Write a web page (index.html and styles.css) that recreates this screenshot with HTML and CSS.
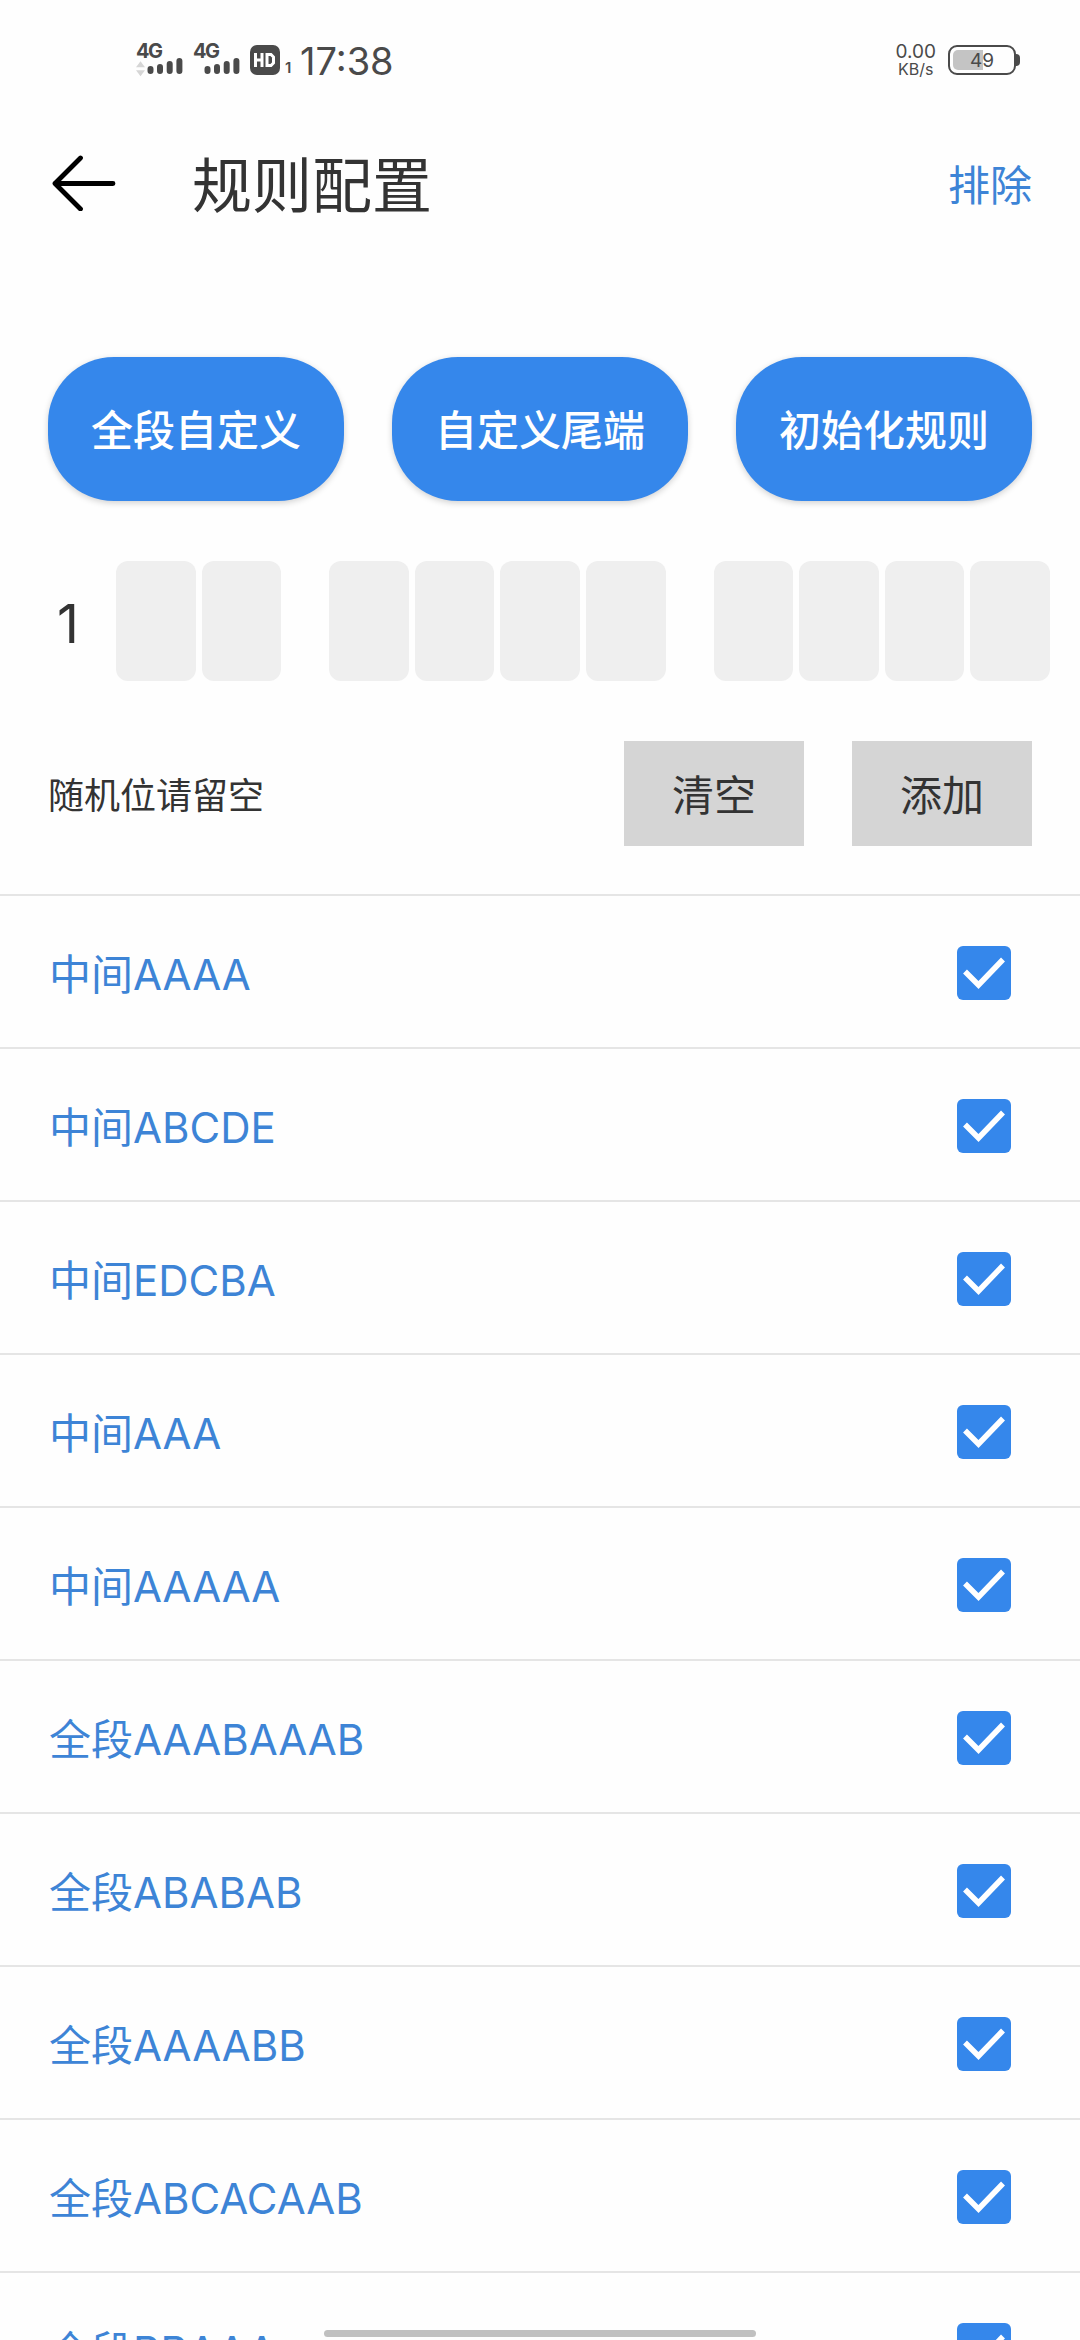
FILE: index.html
```html
<!DOCTYPE html>
<html lang="zh-CN">
<head>
<meta charset="utf-8">
<title>规则配置</title>
<link rel="stylesheet" href="styles.css">
</head>
<body>
<svg class="defs" width="0" height="0">
  <symbol id="check" viewBox="0 0 54 54"><rect width="54" height="54" rx="6" fill="#3587eb"/><path d="M8 25.500L21.500 39L46 13.500" fill="none" stroke="#fff" stroke-width="5.500"/></symbol>
  <symbol id="bars" viewBox="0 0 36 18"><g stroke="#4a4a4a" stroke-width="6" stroke-linecap="round"><path d="M3.500 12V14M13 10V14M22.700 7V14M32.400 4V14"/></g></symbol>
</svg>
<div class="screen">
  <header class="status">
    <div class="signal signal-first"><b>4G</b><div class="signal-row"><svg class="updown" viewBox="0 0 10 17"><path d="M0 6.500L5 0L10 6.500ZM0 10H10L5 16.500Z" fill="#d6d6d6"/></svg><svg class="bars"><use href="#bars"/></svg></div></div>
    <div class="signal signal-second"><b>4G</b><div class="signal-row"><svg class="bars"><use href="#bars"/></svg></div></div>
    <svg class="hd" viewBox="0 0 30 30"><rect width="30" height="30" rx="7" fill="#4a4a4a"/><path d="M5.500 8V22M5.500 15H12M12 8V22M17 9.500H21L23.500 12V18L21 20.500H17Z" fill="none" stroke="#fff" stroke-width="3"/></svg>
    <span class="sim">1</span>
    <span class="time">17:38</span>
    <div class="speed"><span class="rate">0.00</span><span>KB/s</span></div>
    <div class="battery"><span class="charge"></span><span class="level">49</span></div>
    <span class="battery-tip"></span>
  </header>
  <nav class="bar">
    <svg class="back" viewBox="0 0 64 56"><path d="M61 28.500H3M28.500 3L3 28.500L28.500 54" fill="none" stroke="#000" stroke-width="4.800" stroke-linecap="round" stroke-linejoin="round"/></svg>
    <h1>规则配置</h1>
    <a class="exclude">排除</a>
  </nav>
  <div class="actions"><button>全段自定义</button><button>自定义尾端</button><button>初始化规则</button></div>
  <div class="number">
    <span class="lead">1</span>
    <div class="cells two"><i></i><i></i></div>
    <div class="cells four"><i></i><i></i><i></i><i></i></div>
    <div class="cells four"><i></i><i></i><i></i><i></i></div>
  </div>
  <div class="tools"><span class="hint">随机位请留空</span><button>清空</button><button>添加</button></div>
  <ul class="rules">
    <li><span>中间AAAA</span><svg><use href="#check"/></svg></li>
    <li><span>中间ABCDE</span><svg><use href="#check"/></svg></li>
    <li><span>中间EDCBA</span><svg><use href="#check"/></svg></li>
    <li><span>中间AAA</span><svg><use href="#check"/></svg></li>
    <li><span>中间AAAAA</span><svg><use href="#check"/></svg></li>
    <li><span>全段AAABAAAB</span><svg><use href="#check"/></svg></li>
    <li><span>全段ABABAB</span><svg><use href="#check"/></svg></li>
    <li><span>全段AAAABB</span><svg><use href="#check"/></svg></li>
    <li><span>全段ABCACAAB</span><svg><use href="#check"/></svg></li>
    <li><span>全段BBAAA</span><svg><use href="#check"/></svg></li>
  </ul>
  <div class="home"></div>
</div>
</body>
</html>
```

FILE: styles.css
```css
* { box-sizing: border-box; }
body { margin: 0; background: #fefefe; }
.defs { position: absolute; }
.screen {
  position: relative;
  width: 1080px;
  height: 2340px;
  overflow: hidden;
  display: flex;
  flex-direction: column;
  background: #fefefe;
  color: #333;
  font-family: Inter, "Noto Sans CJK SC", sans-serif;
}
.screen > * { flex: none; }
svg { display: block; flex: none; }
button { border: 0; padding: 0; font: inherit; }

.status {
  height: 120px;
  display: flex;
  align-items: flex-start;
  padding: 0 60px 0 136px;
  color: #4a4a4a;
}
.signal { display: flex; flex-direction: column; margin-top: 42px; height: 40px; }
.signal b { font-size: 20px; line-height: 18px; letter-spacing: -1.5px; }
.signal-first { width: 57px; }
.signal-second { width: 57px; }
.signal-row { display: flex; gap: 2px; margin-top: 1px; }
.signal-second .signal-row { padding-left: 11px; }
.updown { width: 9px; height: 16px; }
.bars { width: 36px; height: 18px; margin-top: -4px; }
.hd { width: 30px; height: 30px; margin-top: 45px; }
.sim { font-size: 15px; font-weight: 600; line-height: 16px; margin: 60px 0 0 5px; width: 9px; }
.time { font-size: 38px; line-height: 40px; margin: 41px 0 0 6px; }
.speed {
  display: flex;
  flex-direction: column;
  align-items: center;
  margin: 43px 12px 0 auto;
  font-size: 16px;
  line-height: 17px;
}
.speed .rate { font-size: 19px; line-height: 18px; }
.battery {
  position: relative;
  width: 68px;
  height: 30px;
  margin-top: 45px;
  padding: 3px;
  border: 2px solid #4a4a4a;
  border-radius: 9px;
}
.charge { display: block; width: 30px; height: 20px; background: #c4c4c4; border-radius: 5px 0 0 5px; }
.level { position: absolute; inset: 0; text-align: center; font-size: 19px; line-height: 27px; }
.battery-tip { width: 4px; height: 12px; margin-top: 54px; background: #4a4a4a; border-radius: 0 4px 4px 0; }

.bar { height: 132px; display: flex; align-items: center; padding: 0 48px 0 52px; }
.back { width: 64px; height: 56px; margin-top: -6px; }
h1 { margin: -1px 0 0 76px; font-size: 60px; line-height: 80px; font-weight: 400; }
.exclude { margin: -8px 0 0 auto; font-size: 42px; color: #3d84d6; }

.actions {
  display: grid;
  grid-template-columns: repeat(3, 296px);
  gap: 48px;
  margin-top: 105px;
  padding-left: 48px;
}
.actions button {
  height: 144px;
  padding-bottom: 4px;
  border-radius: 66px;
  background: #3587eb;
  color: #fff;
  font-size: 42px;
  font-weight: 500;
  box-shadow: 0 2px 6px rgba(0, 0, 0, .18);
}

.number { display: flex; align-items: center; gap: 48px; height: 120px; margin-top: 60px; padding: 0 30px 0 57px; }
.lead { width: 59px; margin-right: -48px; font-size: 54px; line-height: 60px; padding-top: 5px; }
.cells { display: grid; gap: 6px; height: 120px; }
.two { grid-template-columns: repeat(2, 79.6px); }
.four { grid-template-columns: repeat(4, 79.6px); }
.cells i { background: #efefef; border-radius: 12px; }

.tools { display: flex; align-items: center; gap: 48px; height: 105px; margin-top: 60px; padding: 0 48px; }
.hint { margin: -2px auto 0 0; font-size: 36px; }
.tools button { width: 180px; height: 105px; padding-bottom: 2px; background: #d5d5d5; color: #333; font-size: 42px; }

.rules { list-style: none; margin: 48px 0 0; padding: 0; }
.rules li {
  display: flex;
  align-items: center;
  justify-content: space-between;
  height: 153px;
  padding: 0 69px 0 49px;
  border-top: 2px solid #e5e5e5;
  color: #3d84d6;
  font-size: 42px;
}
.rules svg { width: 54px; height: 54px; margin-top: 3px; }

.home { position: absolute; left: 324px; top: 2330px; width: 432px; height: 7px; border-radius: 4px; background: #c0c0c0; }
```
